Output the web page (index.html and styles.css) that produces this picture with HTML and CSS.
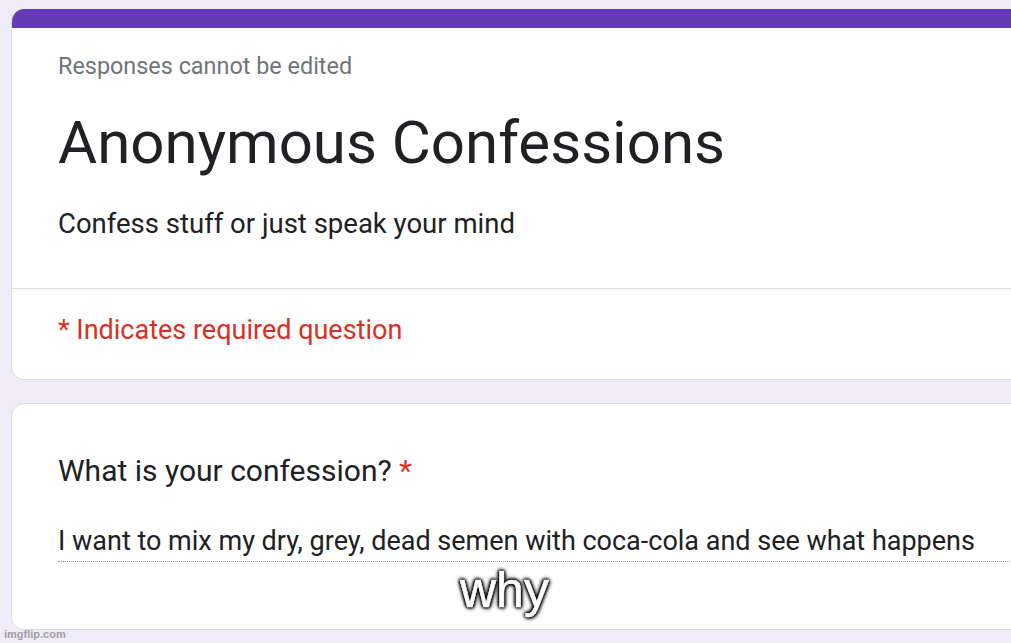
FILE: index.html
```html
<!DOCTYPE html>
<html lang="en">
<head>
<meta charset="utf-8">
<title>Anonymous Confessions</title>
<link rel="stylesheet" href="styles.css">
</head>
<body>
<div class="page">
  <div class="card header-card">
    <div class="accent"></div>
    <div class="header-body">
      <div class="note">Responses cannot be edited</div>
      <h1 class="title">Anonymous Confessions</h1>
      <div class="desc">Confess stuff or just speak your mind</div>
    </div>
    <div class="required-row">* Indicates required question</div>
  </div>
  <div class="card question-card">
    <div class="question">What is your confession? <span class="star">*</span></div>
    <div class="answer">I want to mix my dry, grey, dead semen with coca-cola and see what happens</div>
  </div>
</div>
<div class="caption">why</div>
<div class="watermark">imgflip.com</div>
</body>
</html>
```
FILE: styles.css
```css
html, body {
  margin: 0;
  padding: 0;
}
body {
  width: 1011px;
  height: 643px;
  overflow: hidden;
  background: #f0ebf8;
  position: relative;
  font-family: Roboto, "Liberation Sans", Arial, sans-serif;
  color: #202124;
}
.page {
  padding: 9px 0 0 11px;
  display: flex;
  flex-direction: column;
  gap: 23px;
}
.card {
  width: 1040px;
  background: #fff;
  border: 1px solid #dadce0;
  border-radius: 13px;
  box-sizing: border-box;
  overflow: hidden;
}
.header-card {
  height: 371px;
  border-top: none;
  display: flex;
  flex-direction: column;
}
.accent {
  height: 19px;
  background: #673ab7;
  margin-left: -1px;
}
.header-body {
  padding: 23px 0 0 46px;
  height: 261px;
  box-sizing: border-box;
  border-bottom: 1px solid #dadce0;
}
.note {
  font-size: 23.4px;
  line-height: 30px;
  color: #70757a;
}
.title {
  margin: 26px 0 0 0;
  font-size: 60px;
  font-weight: 400;
  line-height: 72px;
  color: #202124;
}
.desc {
  margin-top: 27px;
  font-size: 27.5px;
  line-height: 36px;
  color: #202124;
}
.required-row {
  padding: 23px 0 0 46px;
  font-size: 27px;
  line-height: 36px;
  color: #d93025;
}
.question-card {
  height: 227px;
  padding: 47px 0 0 46px;
}
.question {
  font-size: 30px;
  line-height: 40px;
  color: #202124;
}
.star {
  color: #d93025;
}
.answer {
  margin-top: 32px;
  font-size: 27px;
  line-height: 36px;
  padding-bottom: 2px;
  color: #202124;
  border-bottom: 1px dotted #9aa0a6;
}
.caption {
  position: absolute;
  left: 460px;
  top: 562px;
  font-family: "Liberation Sans", Arial, sans-serif;
  font-size: 50px;
  line-height: 56px;
  color: #fff;
  -webkit-text-stroke: 0.6px #fff;
  text-shadow: 0 0 2px #000, 0 0 2px #000, 0 0 3px #000, 0 0 4px #000, 1px 1px 4px #000, -1px -1px 4px #000;
}
.watermark {
  position: absolute;
  left: 4px;
  top: 627px;
  font-family: "Liberation Sans", Arial, sans-serif;
  font-size: 11px;
  line-height: 14px;
  color: #a19ea6;
  font-weight: bold;
}
```
